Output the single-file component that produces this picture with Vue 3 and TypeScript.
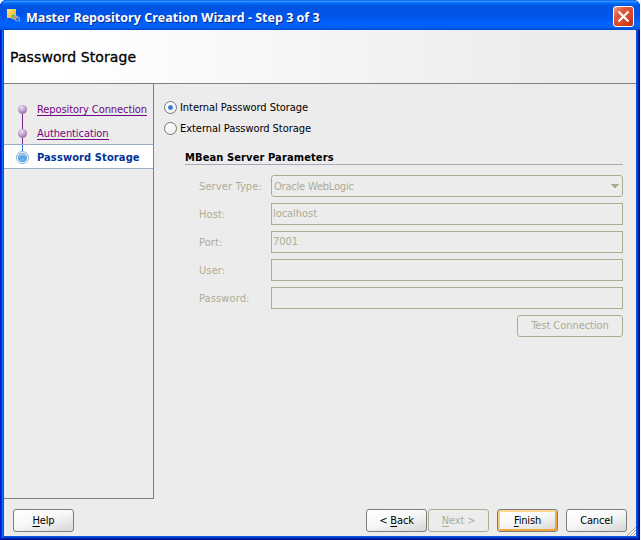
<script setup lang="ts">
import { ref } from 'vue'

interface Field { label: string; value: string; combo?: boolean }

const storage = ref<'internal' | 'external'>('internal')
const fields: Field[] = [
  { label: 'Server Type:', value: 'Oracle WebLogic', combo: true },
  { label: 'Host:', value: 'localhost' },
  { label: 'Port:', value: '7001' },
  { label: 'User:', value: '' },
  { label: 'Password:', value: '' },
]
</script>

<template>
  <div class="screen">
    <div class="window">
      <header class="titlebar">
        <svg class="app-icon" width="14" height="14" viewBox="0 0 14 14">
          <defs>
            <linearGradient id="gold" x1="0" y1="0" x2="1" y2="1">
              <stop offset="0" stop-color="#ffe98a" /><stop offset="1" stop-color="#f5a80c" />
            </linearGradient>
          </defs>
          <rect x="0" y="0" width="9" height="9" fill="url(#gold)" />
          <rect x="4.5" y="5.5" width="4" height="4" fill="#55b64a" stroke="#b9dca0" stroke-width=".6" />
          <rect x="7" y="7" width="3.5" height="3.5" fill="#e0793c" stroke="#b9d4ee" stroke-width=".5" />
          <rect x="8.8" y="8.5" width="4" height="3.5" fill="#2f73d8" stroke="#a8cbf6" stroke-width=".5" />
        </svg>
        <span class="title">Master Repository Creation Wizard - Step 3 of 3</span>
        <button class="close" aria-label="Close">
          <svg width="19" height="19" viewBox="0 0 19 19">
            <path d="M4.5 4.5 14.5 14.5M14.5 4.5 4.5 14.5" stroke="#fff" stroke-width="2.2" />
          </svg>
        </button>
      </header>
      <div class="banner"><h1>Password Storage</h1></div>
      <div class="body">
        <nav class="steps">
          <div class="step">
            <svg width="20" height="24" viewBox="0 0 20 24">
              <defs>
                <radialGradient id="violet" cx=".4" cy=".3" r=".7">
                  <stop offset="0" stop-color="#eee2f2" /><stop offset=".6" stop-color="#bd9cc9" /><stop offset="1" stop-color="#9b70ad" />
                </radialGradient>
                <radialGradient id="azure" cx=".5" cy=".75" r=".8">
                  <stop offset="0" stop-color="#65c4ff" /><stop offset=".45" stop-color="#5a9de8" /><stop offset="1" stop-color="#e4effb" />
                </radialGradient>
              </defs>
              <path d="M10.5 13V24" stroke="#712585" />
              <circle cx="10.5" cy="13.5" r="4.5" fill="url(#violet)" />
            </svg>
            <a class="link">Repository Connection</a>
          </div>
          <div class="step">
            <svg width="20" height="24" viewBox="0 0 20 24">
              <path d="M10.5 0V24" stroke="#712585" />
              <circle cx="10.5" cy="13.5" r="4.5" fill="url(#violet)" />
            </svg>
            <a class="link">Authentication</a>
          </div>
          <div class="step current">
            <svg width="20" height="24" viewBox="0 0 20 24">
              <path d="M10.5 0V6" stroke="#2878d0" />
              <circle cx="10.5" cy="12.5" r="6" fill="#fff" stroke="#79b0dc" />
              <circle cx="10.5" cy="12.5" r="4.2" fill="url(#azure)" stroke="#4c86c8" stroke-width=".7" />
            </svg>
            <b>Password Storage</b>
          </div>
        </nav>
        <main class="content">
          <label class="radio" @click="storage = 'internal'">
            <i class="dial"><i v-if="storage === 'internal'" class="dot"></i></i>
            <span>Internal Password Storage</span>
          </label>
          <label class="radio" @click="storage = 'external'">
            <i class="dial"><i v-if="storage === 'external'" class="dot"></i></i>
            <span>External Password Storage</span>
          </label>
          <section class="group">
            <h2>MBean Server Parameters</h2>
            <div class="form">
              <div v-for="f in fields" :key="f.label" class="row">
                <span class="label">{{ f.label }}</span>
                <div class="field" :class="{ combo: f.combo }">
                  <span>{{ f.value }}</span>
                  <svg v-if="f.combo" width="8" height="4" viewBox="0 0 8 4" shape-rendering="crispEdges">
                    <path d="M0 0H8V1H7V2H6V3H5V4H3V3H2V2H1V1H0Z" fill="#acac93" />
                  </svg>
                </div>
              </div>
              <button class="test" disabled>Test Connection</button>
            </div>
          </section>
        </main>
      </div>
      <footer class="footer">
        <button class="btn help"><span><u>H</u>elp</span></button>
        <button class="btn"><span>&lt; <u>B</u>ack</span></button>
        <button class="btn next" disabled><span><u>N</u>ext &gt;</span></button>
        <button class="btn finish"><span><u>F</u>inish</span></button>
        <button class="btn cancel"><span>Cancel</span></button>
        <svg class="grip" width="9" height="9" viewBox="0 0 9 9">
          <path d="M0 9 9 0M3 9 9 3M6 9 9 6" stroke="#aaa994" />
          <path d="M1 9.5 9.5 1M4 9.5 9.5 4M7 9.5 9.5 7" stroke="#fff" />
        </svg>
      </footer>
    </div>
  </div>
</template>

<style>
body { background: #f4f5fb; overflow: hidden; }
</style>

<style scoped>
* { box-sizing: border-box; }
.screen { width: 641px; height: 540px; font: 11px/14px "DejaVu Sans Condensed", "DejaVu Sans", sans-serif; font-stretch: condensed; letter-spacing: -.05px; color: #000; white-space: nowrap; }
button { font: inherit; letter-spacing: inherit; padding: 0; }
.window { width: 640px; height: 540px; padding: 0 4px 4px; display: flex; flex-direction: column; border-radius: 7px 7px 0 0; overflow: hidden; background: #0831d9; box-shadow: inset 1px 0 #0019cf, inset -1px 0 #00138c, inset 0 -1px #00138c, inset 2px 0 #0831d9, inset -2px -2px #001ea0, inset 3px 0 #166aee, inset -3px -3px #0441d8, inset 4px 0 #0855dd, inset -4px -4px #0855dd; }
.titlebar { height: 30px; flex: none; margin: 0 -4px; padding: 0 6px 0 7px; display: flex; align-items: center; background: linear-gradient(#0058ee 0, #3593ff 4%, #288eff 6%, #127dff 8%, #036ffc 10%, #0262ee 14%, #0057e5 20%, #0054e3 24%, #0055eb 56%, #005bf5 66%, #0062ff 80%, #0062fc 90%, #0052d9 97%, #0043cf 100%); }
.app-icon { margin-top: 1px; }
.title { margin-left: 5px; margin-top: 5px; flex: 1; color: #fff; font: bold 12.5px/18px "Open Sans", "Noto Sans", sans-serif; text-shadow: 1px 1px #0a2a8c; letter-spacing: .02px; }
.close { width: 21px; height: 21px; margin-top: 3px; border: 1px solid #fff; border-radius: 3px; background: linear-gradient(135deg, #f0a088 0, #e0593a 30%, #d94624 65%, #b4300f 100%); display: grid; place-items: center; }
.close svg { flex: none; }
.banner { height: 54px; flex: none; border-bottom: 1px solid #808080; background: linear-gradient(90deg, #fff 0, #fff 10%, #ebebeb 90%); display: flex; align-items: center; padding-left: 6px; }
h1 { margin: 0; font: 400 14px/20px "DejaVu Sans", sans-serif; font-stretch: normal; letter-spacing: .1px; -webkit-text-stroke: .3px #000; }
.body { height: 415px; flex: none; display: flex; background: #ececec; }
.steps { width: 150px; border-right: 1px solid #808080; border-bottom: 1px solid #808080; padding-top: 12px; }
.step { height: 24px; display: flex; padding-left: 8px; }
.step svg { flex: none; }
.link { margin-left: 5px; color: #6f067f; height: 13px; margin-top: 7px; line-height: 13px; border-bottom: 1px solid #6f067f; letter-spacing: -.08px; }
.current { margin-top: 1px; width: 149px; background: #fff; box-shadow: 0 -1px #9ab0ca; border-bottom: 1px solid #9ab0ca; }
.current b { color: #003399; margin: 6px 0 0 5px; line-height: 14px; letter-spacing: .12px; }
.content { flex: 1; padding: 13px 13px 0 10px; }
.radio { display: flex; align-items: center; height: 21px; gap: 3px; }
.dial { width: 13px; height: 13px; border: 1px solid #777; border-radius: 50%; background: linear-gradient(135deg, #fff, #f0f0f0); display: grid; place-items: center; }
.dot { width: 5px; height: 5px; border-radius: 50%; background: radial-gradient(#3269cf, #6a9ce8); }
.group { margin-left: 21px; margin-top: 11px; }
h2 { margin: 0; height: 15px; width: 438px; font-size: 11px; line-height: 16px; letter-spacing: .12px; border-bottom: 1px solid #a8a8b8; }
.form { margin: 10px 0 0 14px; width: 424px; display: flex; flex-direction: column; gap: 6px; color: #acac93; }
.row { display: flex; height: 22px; align-items: center; }
.label { width: 72px; padding-top: 1px; letter-spacing: .12px; }
.field { width: 352px; height: 22px; border: 1px solid #acac93; padding: 3px 3px 0 1px; display: flex; justify-content: space-between; }
.combo { border-radius: 3px; padding: 0 3px 0 2px; align-items: center; }
.combo span { padding-top: 1px; letter-spacing: -.2px; }
.test { align-self: flex-end; width: 106px; height: 22px; border: 1px solid #acac93; border-radius: 3px; color: #acac93; background: transparent; }
.footer { flex: 1; position: relative; display: flex; align-items: flex-start; background: #ececec; padding: 10px 0 0 9px; }
.btn { width: 61px; height: 23px; border: 1px solid #7c7c7c; border-radius: 3px; background: linear-gradient(165deg, #fff 0, #f8f8f8 45%, #e9e9e9 70%, #d6d6d6 100%); color: #000; letter-spacing: -.15px; }
.btn u { text-underline-offset: 2px; text-decoration-thickness: 1px; }
.help { margin-right: 292px; }
.next { margin-left: 1px; background: none; border-color: #acac93; color: #acac93; }
.finish { margin-left: 8px; box-shadow: inset 0 2px #fbd58e, inset 2px 0 #f9c979, inset -2px -2px #eea83b; }
.cancel { margin-left: 8px; }
.grip { position: absolute; right: 0; bottom: 0; }
</style>
